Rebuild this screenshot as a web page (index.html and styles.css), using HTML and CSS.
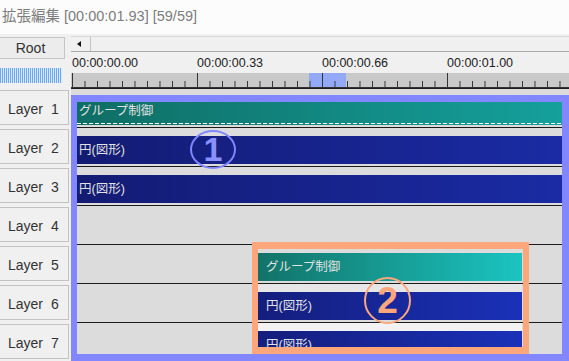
FILE: index.html
```html
<!DOCTYPE html>
<html lang="ja">
<head>
    <meta charset="UTF-8">
    <title>拡張編集</title>
    <link rel="stylesheet" href="styles.css">
</head>
<body>
    <div class="window">
        <div class="title">拡張編集 [00:00:01.93] [59/59]</div>
        <div class="editor">
            <div class="head-left">
                <div class="root-btn">Root</div>
                <div class="meter"></div>
            </div>
            <div class="head-right">
                <div class="hscroll">
                    <div class="hscroll-btn"><span class="arrow"></span></div>
                </div>
                <div class="times">
                    <span>00:00:00.00</span>
                    <span>00:00:00.33</span>
                    <span>00:00:00.66</span>
                    <span>00:00:01.00</span>
                </div>
                <div class="ruler"></div>
            </div>

            <div class="layer-name">Layer 1</div>
            <div class="track"><div class="obj group selected">グループ制御</div></div>

            <div class="layer-name">Layer 2</div>
            <div class="track"><div class="obj figure">円(図形)</div></div>

            <div class="layer-name">Layer 3</div>
            <div class="track"><div class="obj figure">円(図形)</div></div>

            <div class="layer-name">Layer 4</div>
            <div class="track"></div>

            <div class="layer-name">Layer 5</div>
            <div class="track"><div class="obj group bright in-group">グループ制御</div></div>

            <div class="layer-name">Layer 6</div>
            <div class="track group-range"><div class="obj figure bright in-group">円(図形)</div></div>

            <div class="layer-name">Layer 7</div>
            <div class="track group-range light"><div class="obj figure bright in-group">円(図形)</div></div>
        </div>

        <!-- annotations drawn over the screenshot -->
        <div class="mark frame"></div>
        <div class="mark box"></div>
        <div class="mark num one">1</div>
        <div class="mark num two">2</div>
    </div>
</body>
</html>
```

FILE: styles.css
```css
body {
    margin: 0;
    background-color: #f0f0f0;
    font-family: "Liberation Sans", "Noto Sans CJK JP", sans-serif;
}
.window {
    position: relative;
    width: 569px;
    height: 361px;
    overflow: hidden;
}
.title {
    height: 34px;
    line-height: 33px;
    padding-left: 2px;
    background-color: #fcfcfc;
    color: #7c7c7c;
    font-size: 14.5px;
    white-space: nowrap;
}
.editor {
    display: grid;
    grid-template-columns: 71px 1fr;
    grid-template-rows: 54px repeat(7, 39px);
}

/* header: root button + level meter */
.head-left {
    padding-top: 3px;
}
.root-btn {
    width: 69px;
    height: 22px;
    margin-left: -4px;
    box-sizing: border-box;
    border: 1px solid #c6c6c6;
    background-color: #ececec;
    color: #333;
    font-size: 14px;
    line-height: 20px;
    text-align: center;
}
.meter {
    width: 62px;
    height: 15px;
    margin-top: 9px;
    background: repeating-linear-gradient(to right, #6ea8ef 0 1px, #d8e8f9 1px 2px);
}

/* header: scrollbar, time labels, ruler */
.head-right {
    padding-top: 2px;
    display: flex;
    flex-direction: column;
    min-width: 0;
}
.hscroll {
    height: 16px;
    box-sizing: border-box;
    border-top: 1px solid #d8d8d8;
    border-bottom: 1px solid #a8a8a8;
    background-color: #f0f0f0;
    display: flex;
}
.hscroll-btn {
    width: 20px;
    box-sizing: border-box;
    border-right: 1px solid #c4c4c4;
    padding-left: 6px;
    display: flex;
    align-items: center;
}
.arrow {
    width: 0;
    height: 0;
    border-top: 3px solid transparent;
    border-bottom: 3px solid transparent;
    border-right: 4px solid #111;
}
.times {
    height: 21px;
    display: flex;
    color: #222;
    font-size: 12.5px;
    line-height: 22px;
    white-space: nowrap;
}
.times span {
    flex: 0 0 125px;
    padding-left: 1px;
    box-sizing: border-box;
}
.ruler {
    height: 15px;
    background:
        linear-gradient(#333, #333) 0 100% / 100% 1px no-repeat,
        linear-gradient(to right, #333 1px, transparent 1px) 1px 0 / 125px 100% repeat-x,
        linear-gradient(to right, #333 1px, transparent 1px) 1px 100% / 12.5px 7px repeat-x,
        linear-gradient(#93a9f7, #93a9f7) 238px 0 / 37px 100% no-repeat,
        #c9c9c9;
}

/* layers */
.layer-name {
    margin: 2px 2px 2px -4px;
    padding-left: 11px;
    border: 1px solid #c2c2c2;
    background-color: #f0f0f0;
    color: #333;
    font-size: 14px;
    line-height: 37px;
    word-spacing: 4px;
    white-space: nowrap;
}
.track {
    box-sizing: border-box;
    border-top: 1px solid #1c1c1c;
    background-color: #dcdcdc;
    padding-top: 8px;
    overflow: hidden;
    min-width: 0;
}
.track.group-range {
    background: linear-gradient(#e6e6e6, #e6e6e6) 187px 0 / 264px 8px no-repeat, #dcdcdc;
}
.track.group-range.light {
    background: linear-gradient(#f2f2f2, #f2f2f2) 187px 0 / 264px 8px no-repeat, #dcdcdc;
}
.obj {
    height: 28px;
    margin-right: 7px;
    padding-left: 8px;
    box-sizing: border-box;
    color: #e2e2e2;
    font-size: 12.5px;
    line-height: 28px;
    white-space: nowrap;
    overflow: hidden;
}
.obj.group {
    background: linear-gradient(to right, #0f6d64, #15a09c);
}
.obj.figure {
    background: linear-gradient(to right, #131b72, #1a2ba4);
}
.obj.group.selected {
    background:
        repeating-linear-gradient(to right, #fff 0 4px, transparent 4px 6px) 0 26px / 100% 1px no-repeat,
        linear-gradient(to right, #0f6d64, #15a09c);
}
.obj.in-group {
    width: 264px;
    margin-left: 187px;
}
.obj.group.bright {
    background: linear-gradient(to right, #127368, #1bc4c1);
}
.obj.figure.bright {
    background: linear-gradient(to right, #141e7c, #1a31b8);
}

/* annotation overlays */
.mark {
    position: absolute;
    box-sizing: border-box;
}
.frame {
    left: 71px;
    top: 95px;
    width: 498px;
    height: 266px;
    border: 7px solid #8287ff;
    border-left-width: 6px;
}
.box {
    left: 252px;
    top: 242px;
    width: 277px;
    height: 112px;
    border: 7px solid #fca67c;
    border-left-width: 6px;
    border-right-width: 6px;
}
.num {
    border: 2px solid;
    border-radius: 50%;
    display: flex;
    align-items: center;
    justify-content: center;
    font-family: "Liberation Sans", sans-serif;
    font-weight: bold;
    font-size: 34px;
}
.num.one {
    left: 190px;
    top: 130px;
    width: 46px;
    height: 39px;
    color: #8a90ff;
    border-color: #7f86ff;
}
.num.two {
    left: 364px;
    top: 277px;
    width: 47px;
    height: 47px;
    color: #fca67c;
    border-color: #fca67c;
    font-size: 37px;
}
```
